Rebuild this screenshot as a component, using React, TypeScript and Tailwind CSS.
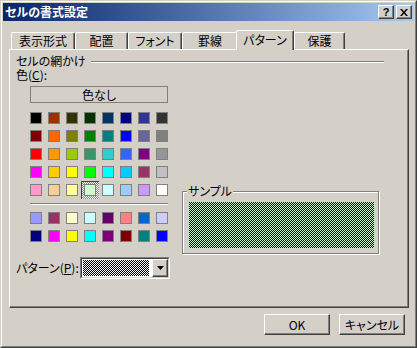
import React from "react"

const basic = [
  ["#000000", "#993300", "#333300", "#003300", "#003366", "#000080", "#333399", "#333333"],
  ["#800000", "#ff6600", "#808000", "#008000", "#008080", "#0000ff", "#666699", "#808080"],
  ["#ff0000", "#ff9900", "#99cc00", "#339966", "#33cccc", "#3366ff", "#800080", "#969696"],
  ["#ff00ff", "#ffcc00", "#ffff00", "#00ff00", "#00ffff", "#00ccff", "#993366", "#c0c0c0"],
  ["#ff99cc", "#ffcc99", "#ffff99", "#ccffcc", "#ccffff", "#99ccff", "#cc99ff", "#ffffff"],
]

const chart = [
  ["#9999ff", "#993366", "#ffffcc", "#ccffff", "#660066", "#ff8080", "#0066cc", "#ccccff"],
  ["#000080", "#ff00ff", "#ffff00", "#00ffff", "#800080", "#800000", "#008080", "#0000ff"],
]

const tabs = [
  { label: "表示形式", w: "w-[64px]" },
  { label: "配置", w: "w-[53px]" },
  { label: "フォント", w: "w-[54px]" },
  { label: "罫線", w: "w-[56px]" },
]

// 50% checker fill, drawn pixel-exact
function Checker({ id, bg, w, h }: { id: string; bg: string; w: number; h: number }) {
  return (
    <svg width={w} height={h} className="block" shapeRendering="crispEdges">
      <defs>
        <pattern id={id} width="2" height="2" patternUnits="userSpaceOnUse">
          <rect width="2" height="2" fill={bg} />
          <rect width="1" height="1" fill="#000" />
          <rect x="1" y="1" width="1" height="1" fill="#000" />
        </pattern>
      </defs>
      <rect width={w} height={h} fill={`url(#${id})`} />
    </svg>
  )
}

function Swatch({ color, selected }: { color: string; selected?: boolean }) {
  return (
    <div className="relative w-[12px] h-[12px]">
      {selected && (
        <div className="absolute -inset-[3px] border-t border-l border-[#404040] bg-[image:repeating-conic-gradient(#808080_0_25%,#ffffff_0_50%)] bg-[length:2px_2px]" />
      )}
      <div className="relative w-[12px] h-[12px] border border-[#808080]" style={{ backgroundColor: color }} />
    </div>
  )
}

function Grid({ rows, pick }: { rows: string[][]; pick?: number }) {
  return (
    <div className="grid grid-cols-[repeat(8,12px)] gap-[6px]">
      {rows.flat().map((c, i) => (
        <Swatch key={i} color={c} selected={i === pick} />
      ))}
    </div>
  )
}

function Button({ children }: { children: React.ReactNode }) {
  return (
    <div className="w-[66px] h-[21px] flex items-center justify-center border border-t-white border-l-white border-r-[#404040] border-b-[#404040] shadow-[inset_-1px_-1px_#808080] leading-[14px]">
      {children}
    </div>
  )
}

export default function App() {
  return (
    <div className="w-[417px] h-[348px] bg-[#d4d0c8] border border-t-[#d4d0c8] border-l-[#d4d0c8] border-r-[#404040] border-b-[#404040] font-['Noto_Sans_CJK_JP',sans-serif] text-[12px] text-black [font-feature-settings:'palt']">
      <div className="h-full border border-t-white border-l-white border-r-[#808080] border-b-[#808080] p-[1px] flex flex-col">
        {/* title bar */}
        <div className="h-[18px] flex items-center bg-linear-to-r from-[#0a246a] to-[#a6caf0] pl-[2px] pr-[2px]">
          <span className="text-white font-bold leading-[14px] flex-1">セルの書式設定</span>
          <div className="flex gap-[2px]">
            <div className="w-[16px] h-[14px] flex items-center justify-center border border-t-white border-l-white border-r-[#404040] border-b-[#404040] shadow-[inset_-1px_-1px_#808080] bg-[#d4d0c8] font-['Liberation_Sans',sans-serif] font-bold text-[11px] leading-[10px]">
              ?
            </div>
            <div className="w-[16px] h-[14px] flex items-center justify-center border border-t-white border-l-white border-r-[#404040] border-b-[#404040] shadow-[inset_-1px_-1px_#808080] bg-[#d4d0c8]">
              <svg width="8" height="7" viewBox="0 0 8 7">
                <path d="M0 0h2l2 2.5L6 0h2L5 3.5 8 7H6L4 4.5 2 7H0l3-3.5z" fill="#000" />
              </svg>
            </div>
          </div>
        </div>

        {/* tabs */}
        <div className="mt-[9px] ml-[8px] h-[19px] flex items-end">
          {tabs.map((t) => (
            <div
              key={t.label}
              className={`${t.w} h-[17px] flex items-center justify-center border-t border-l border-white border-r border-r-[#404040] shadow-[inset_-1px_0_#808080] rounded-t-[2px] leading-[14px]`}
            >
              {t.label}
            </div>
          ))}
          <div className="relative z-10 -ml-[2px] -mb-[1px] w-[58px] h-[20px] bg-[#d4d0c8] flex items-center justify-center pb-[2px] border-t border-l border-white border-r border-r-[#404040] shadow-[inset_-1px_0_#808080] rounded-t-[2px] leading-[14px]">
            パターン
          </div>
          <div className="w-[51px] h-[17px] flex items-center justify-center border-t border-l border-white border-r border-r-[#404040] shadow-[inset_-1px_0_#808080] rounded-t-[2px] leading-[14px]">
            保護
          </div>
        </div>

        {/* panel */}
        <div className="ml-[6px] w-[400px] h-[259px] border border-t-white border-l-white border-r-[#404040] border-b-[#404040] shadow-[inset_-1px_-1px_#808080] pl-[6px]">
          <div className="mt-[4px] h-[13px] mr-[24px] flex items-center">
            <span className="leading-[13px]">セルの網かけ</span>
            <div className="flex-1 ml-[5px] mt-[2px] h-[2px] border-t border-t-[#808080] border-b border-b-white" />
          </div>

          <div className="flex">
            <div className="w-[154px] flex flex-col">
              <div className="mt-[1px] h-[13px] leading-[13px]">
                色(<span className="underline">C</span>):
              </div>
              <div className="ml-[14px] mt-[5px] w-[138px] h-[17px] border border-[#808080] flex items-center justify-center leading-[14px]">
                色なし
              </div>
              <div className="ml-[14px] mt-[9px]">
                <Grid rows={basic} pick={35} />
              </div>
              <div className="ml-[14px] mt-[7px] w-[138px] h-[2px] border-t border-t-[#808080] border-b border-b-white" />
              <div className="ml-[14px] mt-[7px]">
                <Grid rows={chart} />
              </div>
              <div className="mt-[15px] h-[22px] flex items-center">
                <span className="w-[64px] leading-[14px]">
                  パターン(<span className="underline">P</span>):
                </span>
                <div className="w-[90px] h-[22px] border border-t-[#808080] border-l-[#808080] border-r-white border-b-white">
                  <div className="h-full flex bg-white border border-t-[#404040] border-l-[#404040] border-r-[#d4d0c8] border-b-[#d4d0c8]">
                    <div className="flex-1 m-[1px] overflow-hidden">
                      <Checker id="combo" bg="#ffffff" w={66} h={16} />
                    </div>
                    <div className="w-[16px] h-full flex items-center justify-center bg-[#d4d0c8] border border-t-white border-l-white border-r-[#404040] border-b-[#404040] shadow-[inset_-1px_-1px_#808080]">
                      <svg width="7" height="4" viewBox="0 0 7 4">
                        <path d="M0 0h7L3.5 4z" fill="#000" />
                      </svg>
                    </div>
                  </div>
                </div>
              </div>
            </div>

            <div className="ml-[12px] mt-[124px]">
              <div className="relative w-[197px] h-[63px] border border-[#808080] shadow-[1px_1px_0_#fff,inset_1px_1px_0_#fff] pl-[6px] pt-[10px]">
                <span className="absolute -top-[8px] left-[4px] px-[1px] bg-[#d4d0c8] leading-[14px]">サンプル</span>
                <Checker id="sample" bg="#ccffcc" w={185} h={46} />
              </div>
            </div>
          </div>
        </div>

        {/* buttons */}
        <div className="mt-[6px] mr-[9px] flex justify-end gap-[9px]">
          <Button>OK</Button>
          <Button>キャンセル</Button>
        </div>
      </div>
    </div>
  )
}
